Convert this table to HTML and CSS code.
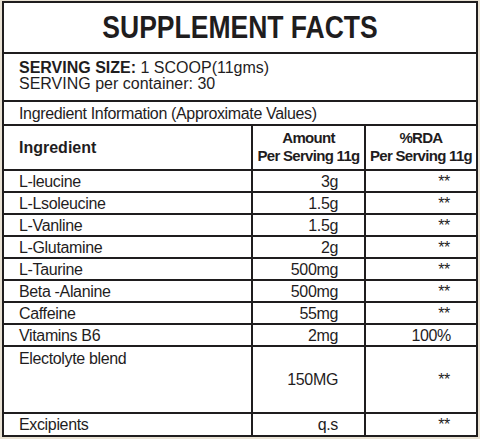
FILE: index.html
```html
<!DOCTYPE html>
<html>

<head>
  <title>Supplement Facts</title>
  <link rel="stylesheet" href="styles.css">
</head>

<body>
  <table class="facts">
    <colgroup>
      <col class="col-name">
      <col class="col-amount">
      <col class="col-rda">
    </colgroup>
    <tr class="title-row">
      <td colspan="3" class="title"><span class="title-text">SUPPLEMENT FACTS</span></td>
    </tr>
    <tr class="serving-row">
      <td colspan="3" class="serving">
        <div><b>SERVING SIZE:</b> 1 SCOOP(11gms)</div>
        <div>SERVING per container: 30</div>
      </td>
    </tr>
    <tr class="info-row">
      <td colspan="3" class="info">Ingredient Information (Approximate Values)</td>
    </tr>
    <tr class="head-row">
      <th class="head-name">Ingredient</th>
      <th class="head-center">Amount<br>Per Serving 11g</th>
      <th class="head-center">%RDA<br>Per Serving 11g</th>
    </tr>
    <tr class="item"><td>L-leucine</td><td class="amount">3g</td><td class="rda">**</td></tr>
    <tr class="item"><td>L-Lsoleucine</td><td class="amount">1.5g</td><td class="rda">**</td></tr>
    <tr class="item"><td>L-Vanline</td><td class="amount">1.5g</td><td class="rda">**</td></tr>
    <tr class="item"><td>L-Glutamine</td><td class="amount">2g</td><td class="rda">**</td></tr>
    <tr class="item"><td>L-Taurine</td><td class="amount">500mg</td><td class="rda">**</td></tr>
    <tr class="item"><td>Beta -Alanine</td><td class="amount">500mg</td><td class="rda">**</td></tr>
    <tr class="item"><td>Caffeine</td><td class="amount">55mg</td><td class="rda">**</td></tr>
    <tr class="item"><td>Vitamins B6</td><td class="amount">2mg</td><td class="rda pct">100%</td></tr>
    <tr class="item tall">
      <td class="top">Electolyte blend</td>
      <td class="amount">150MG</td>
      <td class="rda">**</td>
    </tr>
    <tr class="item last"><td>Excipients</td><td class="amount">q.s</td><td class="rda">**</td></tr>
  </table>
</body>

</html>
```

FILE: styles.css
```css
body {
  margin: 0;
  padding: 1px 2px 0 2px;
  background-color: #e9e2d4;
  font-family: "Liberation Sans", Arial, sans-serif;
  color: #1f1d1e;
}

.facts {
  width: 476px;
  border-collapse: collapse;
  table-layout: fixed;
  background-color: #ffffff;
  border: 2px solid #1f1d1e;
}

.col-name {
  width: 249px;
}

.col-amount {
  width: 113px;
}

.col-rda {
  width: 112px;
}

.facts td,
.facts th {
  border: 2px solid #1f1d1e;
  padding: 0;
  font-size: 16px;
  line-height: 17px;
  letter-spacing: -0.35px;
  white-space: nowrap;
}

.title-row {
  height: 51px;
}

.facts .title {
  text-align: center;
  font-size: 31px;
  font-weight: bold;
  line-height: 34px;
  letter-spacing: 0;
  padding-top: 1px;
}

.title-text {
  display: inline-block;
  transform: scaleX(0.855);
}

.serving-row {
  height: 48px;
}

.facts .serving {
  padding: 0 0 2px 15px;
  line-height: 16px;
  letter-spacing: 0;
}

.info-row {
  height: 24px;
}

.facts .info {
  padding-left: 15px;
}

.head-row {
  height: 45px;
}

.facts .head-name {
  text-align: left;
  padding-left: 15px;
  letter-spacing: 0;
}

.facts .head-center {
  text-align: center;
  font-size: 15px;
  line-height: 18px;
  letter-spacing: -0.7px;
  padding-bottom: 2px;
}

.item {
  height: 22px;
}

.item td {
  padding-left: 15px;
  vertical-align: middle;
}

.facts .item td.amount,
.facts .item td.rda {
  text-align: right;
  padding: 0 26px 0 0;
}

.facts .item td.pct {
  padding-right: 25px;
}

.tall {
  height: 67px;
}

.facts .tall td.top {
  vertical-align: top;
  padding-top: 3px;
}

.last {
  height: 23px;
}
```
